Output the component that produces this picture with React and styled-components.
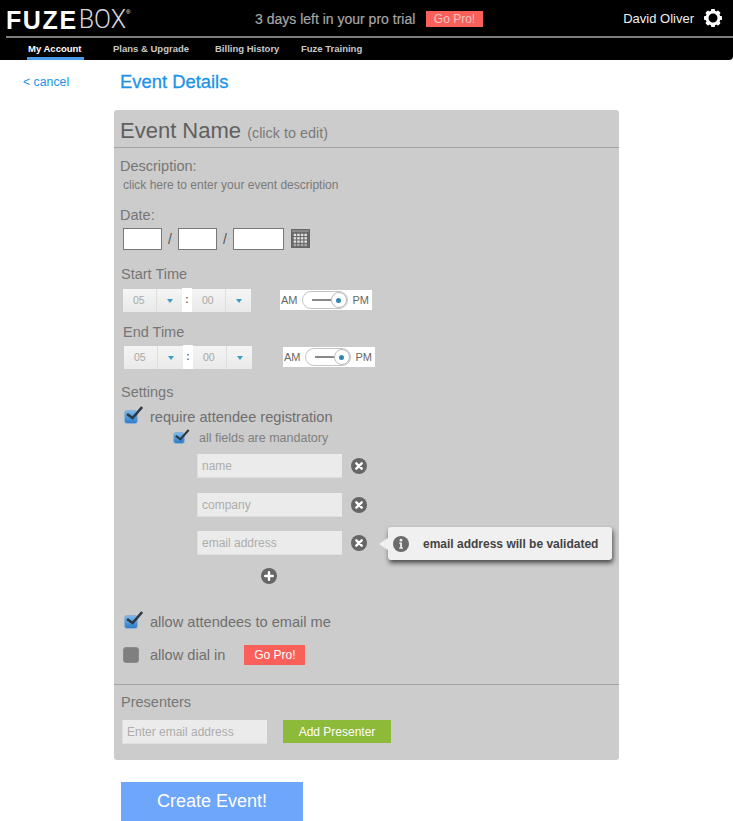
import React from 'react';
import styled, {createGlobalStyle} from 'styled-components';

const Global = createGlobalStyle`
    html, body {margin: 0; padding: 0; background: #fff;}
    body {font-family: "Liberation Sans", Arial, sans-serif; width: 733px; height: 821px; overflow: hidden;}
`;

const Header = styled.header`
    background: #000;
    height: 60px;
    border-bottom-right-radius: 4px;
    color: #fff;
`;

const TopBar = styled.div`
    height: 36px;
    display: flex;
    align-items: center;
    padding: 2px 0 0 6px;
    box-sizing: border-box;
    border-bottom: 1px solid #000;
`;

const Logo = styled.div`
    width: 174px;
    flex: none;
    display: flex;
    align-items: flex-start;
    padding-top: 3px;
    font-size: 25px;
    line-height: 28px;
`;

const LogoBold = styled.span`
    font-weight: 700;
    letter-spacing: 1.6px;
`;

const LogoThin = styled.span`
    font-family: Roboto, "Liberation Sans", sans-serif;
    font-weight: 300;
    color: #d8d8d8;
    margin-left: 1px;
`;

const LogoMark = styled.sup`
    font-size: 6px;
    line-height: 12px;
`;

const Trial = styled.div`
    margin: 0 0 0 75px;
    width: 171px;
    flex: none;
    font-size: 14px;
    color: #a6a6a6;
    white-space: nowrap;
    -webkit-text-stroke: 0.2px #a6a6a6;
`;

const ProBadge = styled.div`
    background: #f9605a;
    color: ${props => props.dim ? '#f3c4c0' : '#fff'};
    font-size: 12px;
    display: flex;
    align-items: center;
    justify-content: center;
    width: ${props => props.w}px;
    height: ${props => props.h}px;
    flex: none;
`;

const User = styled.div`
    margin-left: auto;
    display: flex;
    align-items: center;
    gap: 10px;
    padding: 0 11px 1px 0;
    font-size: 13px;
    color: #f0f0f0;
`;

const Rule = styled.div`
    height: 2px;
    margin-left: 6px;
    background: #7d7d7d;
`;

const Nav = styled.nav`
    display: flex;
    padding-left: 27px;
    height: 22px;
`;

const NavItem = styled.div`
    font-size: 9.5px;
    font-weight: 700;
    color: ${props => props.active ? '#fff' : '#c9c9c9'};
    width: ${props => props.w}px;
    flex: none;
    box-sizing: border-box;
    padding-top: 5px;
    white-space: nowrap;
    height: 22px;
    border-bottom: ${props => props.active ? '3px solid #4a9be8' : 'none'};
    text-indent: 1px;
`;

const Body = styled.div`
    display: flex;
`;

const Side = styled.div`
    width: 114px;
    flex: none;
    padding: 15px 0 0 23px;
    box-sizing: border-box;
    font-size: 12.3px;
    color: #1c93e8;
`;

const Main = styled.main`
    width: 505px;
`;

const PageTitle = styled.h1`
    margin: 0;
    padding: 11px 0 0 6px;
    height: 50px;
    box-sizing: border-box;
    font-size: 18.4px;
    line-height: 21px;
    font-weight: 400;
    color: #1c93e8;
    -webkit-text-stroke: 0.3px #1c93e8;
`;

const Panel = styled.section`
    background: #cccccc;
    border-radius: 3px;
    height: 650px;
`;

const TitleRow = styled.div`
    height: 38px;
    box-sizing: border-box;
    border-bottom: 1px solid #a3a3a3;
    padding: 7px 0 0 6px;
    font-size: 22px;
    line-height: 27px;
    color: #606060;
    white-space: nowrap;
`;

const TitleHint = styled.span`
    font-size: 14.4px;
    color: #7a7a7a;
`;

const Content = styled.div`
    position: relative;
    height: 536px;
    padding: 10px 0 0 5px;
    box-sizing: border-box;
`;

const FieldLabel = styled.div`
    font-size: 14.5px;
    line-height: 16px;
    color: #767676;
    margin: ${props => props.top || 0}px 0 0 ${props => props.left || 0}px;
`;

const Hint = styled.div`
    font-size: 12px;
    line-height: 14px;
    color: #7a7a7a;
    margin: 4px 0 0 4px;
`;

const DateRow = styled.div`
    display: flex;
    align-items: center;
    margin: 4px 0 0 4px;
    height: 23px;
`;

const DateBox = styled.div`
    width: ${props => props.w}px;
    height: 22px;
    box-sizing: border-box;
    background: #fff;
    border: 1px solid #777;
    flex: none;
`;

const Slash = styled.span`
    width: 16px;
    text-align: center;
    font-size: 14px;
    color: #555;
    flex: none;
`;

const CalGrid = styled.svg`
    margin-left: 7px;
    flex: none;
`;

const TimeRow = styled.div`
    display: flex;
    align-items: center;
    margin: ${props => props.top}px 0 0 ${props => props.left}px;
    height: 24px;
`;

const Stepper = styled.div`
    display: flex;
    width: 59px;
    height: 23px;
    flex: none;
    background: linear-gradient(#f5f5f5, #e9e9e9);
    font-size: 10.5px;
    color: #a8a8a8;
    align-items: center;
`;

const StepValue = styled.div`
    width: 33px;
    padding-left: 10px;
    box-sizing: border-box;
    flex: none;
`;

const StepArrow = styled.div`
    width: 26px;
    height: 23px;
    flex: none;
    border-left: 1px solid #dedede;
    display: flex;
    align-items: center;
    justify-content: center;
    &::after {
        content: "";
        margin-top: 2px;
        border-left: 3px solid transparent;
        border-right: 3px solid transparent;
        border-top: 4px solid #3c9cc4;
    }
`;

const Colon = styled.div`
    width: 10px;
    height: 24px;
    flex: none;
    background: #fff;
    color: #666;
    font-size: 10px;
    font-weight: 700;
    text-align: center;
    line-height: 23px;
`;

const AmPm = styled.div`
    margin-left: ${props => props.gap}px;
    width: 92px;
    height: 20px;
    flex: none;
    background: #fff;
    display: flex;
    align-items: center;
    font-size: 11px;
    color: #666;
    padding-left: 1px;
    box-sizing: border-box;
`;

const SliderTrack = styled.div`
    position: relative;
    width: 46px;
    height: 18px;
    margin: 0 5px 0 4px;
    box-sizing: border-box;
    border: 1px solid #c4c4c4;
    border-radius: 9px;
    flex: none;
    &::before {
        content: "";
        position: absolute;
        left: 9px;
        top: 7px;
        width: 21px;
        height: 2px;
        background: #888;
    }
`;

const SliderKnob = styled.div`
    position: absolute;
    right: 0;
    top: 0;
    width: 16px;
    height: 16px;
    box-sizing: border-box;
    border-radius: 50%;
    border: 1px solid #bbb;
    background: #fff;
    display: flex;
    align-items: center;
    justify-content: center;
    &::after {
        content: "";
        width: 5px;
        height: 5px;
        border-radius: 50%;
        background: #2f86b5;
    }
`;

const CheckRow = styled.div`
    display: flex;
    align-items: center;
    margin: ${props => props.top || 0}px 0 0 ${props => props.left}px;
    font-size: ${props => props.size}px;
    color: ${props => props.color || '#6f6f6f'};
    height: 18px;
`;

const CheckLabel = styled.span`
    margin-left: ${props => props.gap}px;
    white-space: nowrap;
`;

const CheckBox = styled.div`
    position: relative;
    width: ${props => props.size}px;
    height: ${props => props.size}px;
    flex: none;
    border-radius: 3px;
    box-sizing: border-box;
    border: 1px solid ${props => props.checked ? '#8fb0d0' : '#8a8a8a'};
    background: ${props => props.checked ? 'linear-gradient(#7db8ea, #2d7ccb)' : '#7f7f7f'};
`;

const Tick = styled.svg`
    position: absolute;
    left: 0;
    top: ${props => props.offset}px;
`;

const FieldRow = styled.div`
    position: relative;
    display: flex;
    align-items: center;
    margin: ${props => props.top}px 0 0 78px;
    height: 24px;
`;

const TextBox = styled.div`
    background: #ebebeb;
    width: ${props => props.w}px;
    height: 24px;
    box-sizing: border-box;
    padding-left: 4px;
    flex: none;
    font-size: 12px;
    line-height: 24px;
    color: #adadad;
    border: 1px solid #dedede;
    border-width: 0 0 1px 1px;
    white-space: nowrap;
`;

const RoundIcon = styled.svg`
    margin-left: ${props => props.gap || 0}px;
    flex: none;
    display: block;
`;

const Tooltip = styled.div`
    position: absolute;
    left: 191px;
    top: -4px;
    width: 224px;
    height: 33px;
    display: flex;
    align-items: center;
    background: #f0f0f0;
    border-radius: 3px;
    box-shadow: 1px 3px 5px rgba(0, 0, 0, 0.65);
    font-size: 12px;
    font-weight: 700;
    color: #444;
    box-sizing: border-box;
    padding-left: 5px;
    white-space: nowrap;
    &::before {
        content: "";
        position: absolute;
        left: -9px;
        top: 11px;
        border-top: 6px solid transparent;
        border-bottom: 6px solid transparent;
        border-right: 9px solid #f0f0f0;
    }
`;

const TooltipText = styled.span`
    margin-left: 14px;
`;

const AddRow = styled.div`
    margin: 13px 0 0 142px;
    height: 16px;
`;

const InlineBadge = styled.div`
    margin-left: 19px;
`;

const Presenters = styled.div`
    border-top: 1px solid #a3a3a3;
    height: 75px;
    box-sizing: border-box;
    padding: 9px 0 0 7px;
`;

const PresenterRow = styled.div`
    display: flex;
    margin: 10px 0 0 1px;
    align-items: flex-start;
`;

const AddButton = styled.div`
    margin-left: 16px;
    width: 108px;
    height: 23px;
    background: #8dba38;
    color: #fff;
    font-size: 12px;
    display: flex;
    align-items: center;
    justify-content: center;
`;

const CreateButton = styled.div`
    margin: 22px 0 0 7px;
    width: 182px;
    height: 39px;
    background: #6ea6fb;
    color: #fff;
    font-size: 18px;
    display: flex;
    align-items: center;
    justify-content: center;
`;

const Gear = () => (
    <svg width="18" height="18" viewBox="0 0 18 18">
        {[0, 45, 90, 135, 180, 225, 270, 315].map(angle => (
            <rect key={angle} x="7" y="0" width="4" height="4" rx="0.8" fill="#fff" transform={`rotate(${angle} 9 9)`} />
        ))}
        <circle cx="9" cy="9" r="6" fill="none" stroke="#fff" strokeWidth="3" />
    </svg>
);

const CloseIcon = ({gap}) => (
    <RoundIcon gap={gap} width="16" height="16" viewBox="0 0 16 16">
        <circle cx="8" cy="8" r="8" fill="#666" />
        <path d="M5.3 5.3 L10.7 10.7 M10.7 5.3 L5.3 10.7" stroke="#fff" strokeWidth="2.4" strokeLinecap="round" />
    </RoundIcon>
);

const PlusIcon = () => (
    <RoundIcon width="16" height="16" viewBox="0 0 16 16">
        <circle cx="8" cy="8" r="8" fill="#666" />
        <path d="M8 4.2 V11.8 M4.2 8 H11.8" stroke="#fff" strokeWidth="2.4" strokeLinecap="round" />
    </RoundIcon>
);

const InfoIcon = () => (
    <RoundIcon width="16" height="16" viewBox="0 0 16 16">
        <circle cx="8" cy="8" r="8" fill="#6b6b6b" />
        <circle cx="8" cy="4.2" r="1.4" fill="#f0f0f0" />
        <path d="M6.2 6.6 H9 V11.6 H10 V12.8 H6.2 V11.6 H7.2 V7.8 H6.2 Z" fill="#f0f0f0" />
    </RoundIcon>
);

const Calendar = () => (
    <CalGrid width="19" height="19" viewBox="0 0 18 18">
        <rect width="18" height="18" fill="#666" />
        <rect x="1" y="1" width="16" height="2" fill="#8a8a8a" />
        {[0, 1, 2, 3].map(row => [0, 1, 2, 3].map(col => (
            <rect key={`${row}-${col}`} x={2.5 + col * 3.4} y={4.5 + row * 3.2} width="2.4" height="2.2" fill={row === 3 ? '#aaa' : '#e0e0e0'} />
        )))}
    </CalGrid>
);

const Check = ({size, checked}) => (
    <CheckBox size={size} checked={checked}>
        {checked && (
            <Tick offset={-Math.round(size * 0.35)} width={size * 1.3} height={size * 1.15} viewBox="0 0 18 16">
                <path d="M2 8 L7.5 12 L17 1" fill="none" stroke="#2c3a46" strokeWidth="2.6" />
            </Tick>
        )}
    </CheckBox>
);

const TimePicker = ({top, left, gap}) => (
    <TimeRow top={top} left={left}>
        <Stepper><StepValue>05</StepValue><StepArrow /></Stepper>
        <Colon>:</Colon>
        <Stepper><StepValue>00</StepValue><StepArrow /></Stepper>
        <AmPm gap={gap}>AM<SliderTrack><SliderKnob /></SliderTrack>PM</AmPm>
    </TimeRow>
);

export default () => (
    <>
        <Global />
        <Header>
            <TopBar>
                <Logo><LogoBold>FUZE</LogoBold><LogoThin>BOX</LogoThin><LogoMark>®</LogoMark></Logo>
                <Trial>3 days left in your pro trial</Trial>
                <ProBadge dim w={57} h={16}>Go Pro!</ProBadge>
                <User>David Oliver <Gear /></User>
            </TopBar>
            <Rule />
            <Nav>
                <NavItem active w={57}>My Account</NavItem>
                <NavItem w={28} />
                <NavItem w={102}>Plans &amp; Upgrade</NavItem>
                <NavItem w={86}>Billing History</NavItem>
                <NavItem w={80}>Fuze Training</NavItem>
            </Nav>
        </Header>
        <Body>
            <Side>&lt; cancel</Side>
            <Main>
                <PageTitle>Event Details</PageTitle>
                <Panel>
                    <TitleRow>Event Name <TitleHint>(click to edit)</TitleHint></TitleRow>
                    <Content>
                        <FieldLabel left={1}>Description:</FieldLabel>
                        <Hint>click here to enter your event description</Hint>
                        <FieldLabel top={15} left={1}>Date:</FieldLabel>
                        <DateRow>
                            <DateBox w={39} />
                            <Slash>/</Slash>
                            <DateBox w={39} />
                            <Slash>/</Slash>
                            <DateBox w={51} />
                            <Calendar />
                        </DateRow>
                        <FieldLabel top={16} left={2}>Start Time</FieldLabel>
                        <TimePicker top={6} left={4} gap={29} />
                        <FieldLabel top={12} left={4}>End Time</FieldLabel>
                        <TimePicker top={5} left={5} gap={31} />
                        <FieldLabel top={15} left={2}>Settings</FieldLabel>
                        <CheckRow top={8} left={5} size={14.6}>
                            <Check size={14} checked />
                            <CheckLabel gap={12}>require attendee registration</CheckLabel>
                        </CheckRow>
                        <CheckRow top={3} left={54} size={12.5} color="#7f7f7f">
                            <Check size={12} checked />
                            <CheckLabel gap={14}>all fields are mandatory</CheckLabel>
                        </CheckRow>
                        <FieldRow top={7}>
                            <TextBox w={145}>name</TextBox>
                            <CloseIcon gap={9} />
                        </FieldRow>
                        <FieldRow top={15}>
                            <TextBox w={145}>company</TextBox>
                            <CloseIcon gap={9} />
                        </FieldRow>
                        <FieldRow top={14}>
                            <TextBox w={145}>email address</TextBox>
                            <CloseIcon gap={9} />
                            <Tooltip>
                                <InfoIcon />
                                <TooltipText>email address will be validated</TooltipText>
                            </Tooltip>
                        </FieldRow>
                        <AddRow><PlusIcon /></AddRow>
                        <CheckRow top={29} left={5} size={14.6}>
                            <Check size={14} checked />
                            <CheckLabel gap={12}>allow attendees to email me</CheckLabel>
                        </CheckRow>
                        <CheckRow top={15} left={4} size={14.6}>
                            <Check size={16} />
                            <CheckLabel gap={11}>allow dial in</CheckLabel>
                            <InlineBadge><ProBadge w={61} h={20}>Go Pro!</ProBadge></InlineBadge>
                        </CheckRow>
                    </Content>
                    <Presenters>
                        <FieldLabel>Presenters</FieldLabel>
                        <PresenterRow>
                            <TextBox w={145}>Enter email address</TextBox>
                            <AddButton>Add Presenter</AddButton>
                        </PresenterRow>
                    </Presenters>
                </Panel>
                <CreateButton>Create Event!</CreateButton>
            </Main>
        </Body>
    </>
);
